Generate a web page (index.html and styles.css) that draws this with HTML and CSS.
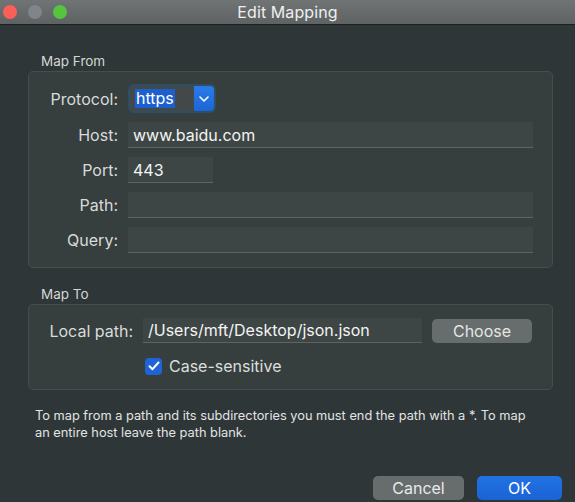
FILE: index.html
```
<!DOCTYPE html>
<html>
<head>
<meta charset="utf-8">
<link rel="stylesheet" href="styles.css">
</head>
<body>
<div class="window">
  <div class="titlebar">
    <div class="lights">
      <span class="light red"></span>
      <span class="light gray"></span>
      <span class="light green"></span>
    </div>
    <div class="title">Edit Mapping</div>
    <div class="spacer"></div>
  </div>
  <div class="content">
    <div class="section-label first">Map From</div>
    <div class="group from">
      <label class="lbl">Protocol:</label>
      <div class="popup-wrap">
        <div class="popup">
          <span class="popup-text"><span class="sel">https</span></span>
          <span class="popup-arrow">
            <svg width="10" height="6" viewBox="0 0 10 6"><path d="M1 1 L5 5 L9 1" fill="none" stroke="#fff" stroke-width="1.6" stroke-linecap="round" stroke-linejoin="round"/></svg>
          </span>
        </div>
      </div>
      <label class="lbl">Host:</label>
      <div class="field">www.baidu.com</div>
      <label class="lbl">Port:</label>
      <div class="field port">443</div>
      <label class="lbl">Path:</label>
      <div class="field"></div>
      <label class="lbl">Query:</label>
      <div class="field"></div>
    </div>
    <div class="section-label">Map To</div>
    <div class="group to">
      <label class="lbl">Local path:</label>
      <div class="field">/Users/mft/Desktop/json.json</div>
      <button class="btn choose">Choose</button>
      <div class="check-row">
        <span class="checkbox">
          <svg width="12" height="10" viewBox="0 0 12 10"><path d="M1.5 5.2 L4.5 8.2 L10.5 1.5" fill="none" stroke="#fff" stroke-width="2" stroke-linecap="round" stroke-linejoin="round"/></svg>
        </span>
        <span class="check-label">Case-sensitive</span>
      </div>
    </div>
    <p class="help">To map from a path and its subdirectories you must end the path with a *. To map an entire host leave the path blank.</p>
    <div class="actions">
      <button class="btn cancel">Cancel</button>
      <button class="btn ok">OK</button>
    </div>
  </div>
</div>
</body>
</html>
```
FILE: styles.css
```
* { box-sizing: border-box; }
html, body { margin: 0; padding: 0; }
body {
  width: 575px;
  height: 502px;
  overflow: hidden;
  background: #2f3637;
  font-family: Inter, "Open Sans", sans-serif;
  color: #dcdedd;
}
.window { width: 575px; height: 502px; }
.titlebar {
  height: 25px;
  display: grid;
  grid-template-columns: 90px 1fr 90px;
  align-items: center;
  background: linear-gradient(#707474, #5e6262);
  border-bottom: 1px solid #1c1f1f;
}
.lights { display: flex; gap: 11px; padding-left: 3px; align-items: center; }
.light { width: 14px; height: 14px; border-radius: 50%; display: block; }
.light.red { background: #fc5f57; }
.light.gray { background: #80858a; }
.light.green { background: #53c53f; }
.title {
  text-align: center;
  font-size: 16px;
  color: #eeefef;
  letter-spacing: 0.1px;
}
.content { padding: 0 22px 0 28px; }
.section-label {
  font-size: 13.5px;
  line-height: 16px;
  padding-left: 13px;
  margin-top: 18px;
  margin-bottom: 2px;
  color: #d4d6d5;
}
.section-label.first { margin-top: 28px; }
.group {
  background: #363e3e;
  border: 1px solid #464e4d;
  border-radius: 5px;
  display: grid;
  align-items: center;
  column-gap: 10px;
}
.group.from {
  grid-template-columns: 89px 405px;
  row-gap: 9px;
  padding: 12px 19px 14px 0;
}
.group.to {
  grid-template-columns: 104px 279px 100px;
  row-gap: 14px;
  padding: 13px 19px 14px 0;
}
.lbl {
  text-align: right;
  font-size: 16px;
  color: #d9dbda;
}
.field {
  height: 26px;
  background: #3e4645;
  border-bottom: 1px solid #5d6463;
  font-size: 16px;
  line-height: 26px;
  padding-left: 5px;
  color: #f4f4f4;
  white-space: nowrap;
  overflow: hidden;
}
.group.to .field { height: 25px; line-height: 25px; }
.field.port { width: 85px; }
.popup-wrap {
  width: 88px;
  height: 29px;
  padding: 2px;
  border-radius: 6px;
  background: #2d4e63;
}
.popup {
  display: flex;
  height: 25px;
  border-radius: 4px;
  overflow: hidden;
  background: #434948;
}
.popup-text {
  flex: 1;
  display: flex;
  align-items: center;
  padding-left: 5px;
}
.sel {
  background: #1b5fd0;
  color: #fff;
  font-size: 16px;
  line-height: 19px;
  padding: 0 1px;
}
.popup-arrow {
  width: 20px;
  background: linear-gradient(#2a7be8, #1b66d6);
  display: flex;
  align-items: center;
  justify-content: center;
}
.btn {
  font-family: Inter, "Open Sans", sans-serif;
  font-size: 16px;
  border: none;
  border-radius: 5px;
  height: 24px;
  padding: 0;
}
.choose {
  background: #676d6c;
  color: #e4e6e5;
}
.check-row {
  grid-column: 2 / 4;
  display: flex;
  align-items: center;
  gap: 7px;
  padding-left: 2px;
  height: 18px;
}
.checkbox {
  width: 17px;
  height: 17px;
  border-radius: 4px;
  background: #1f63d6;
  display: flex;
  align-items: center;
  justify-content: center;
}
.check-label { font-size: 16px; color: #dcdedd; }
.help {
  margin: 17px 0 0 7px;
  font-size: 12.8px;
  line-height: 17px;
  color: #e2e4e3;
  width: 500px;
}
.actions {
  display: flex;
  justify-content: flex-end;
  gap: 13px;
  margin-top: 35px;
  margin-right: -9px;
}
.cancel {
  width: 91px;
  background: #676d6c;
  color: #e8eaea;
}
.ok {
  width: 85px;
  background: linear-gradient(#2272e4, #1a63d4);
  color: #fff;
}
```
